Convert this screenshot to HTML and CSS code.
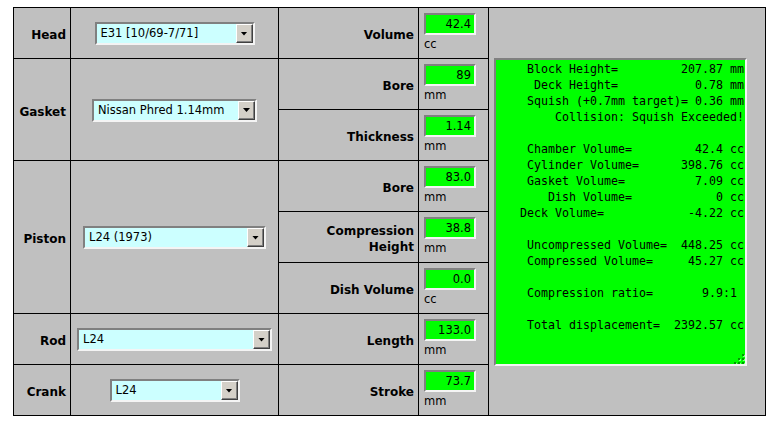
FILE: index.html
```html
<!DOCTYPE html>
<html lang="en">

<head>
    <meta charset="UTF-8">
    <meta name="viewport" content="width=device-width, initial-scale=1.0">
    <title>Compression Calculator</title>
    <link rel="stylesheet" href="styles.css">
</head>

<body>
    <div class="calc">
        <!-- Head -->
        <div class="cell cell--name">Head</div>
        <div class="cell cell--select">
            <div class="dropdown dropdown--head">
                <span class="dropdown__text">E31 [10/69-7/71]</span>
                <span class="dropdown__button"></span>
            </div>
        </div>
        <div class="cell cell--label">Volume</div>
        <div class="cell cell--value">
            <div class="field">42.4</div>
            <div class="unit">cc</div>
        </div>
        <div class="cell cell--results">
            <div class="results"><div class="results__text"> Block Height=         207.87 mm
  Deck Height=           0.78 mm
 Squish (+0.7mm target)= 0.36 mm
     Collision: Squish Exceeded!

 Chamber Volume=         42.4 cc
 Cylinder Volume=      398.76 cc
 Gasket Volume=          7.09 cc
    Dish Volume=            0 cc
Deck Volume=            -4.22 cc

 Uncompressed Volume=  448.25 cc
 Compressed Volume=     45.27 cc

 Compression ratio=       9.9:1

 Total displacement=  2392.57 cc</div>
                <svg class="results__grip" width="12" height="12" viewBox="0 0 12 12">
                    <g fill="#80ff80">
                        <rect x="10" y="3" width="2" height="2"/>
                        <rect x="10" y="7" width="2" height="2"/>
                        <rect x="6" y="7" width="2" height="2"/>
                        <rect x="10" y="11" width="2" height="1"/>
                        <rect x="6" y="11" width="2" height="1"/>
                        <rect x="2" y="11" width="2" height="1"/>
                    </g>
                    <g fill="#009a00">
                        <rect x="9" y="2" width="2" height="2"/>
                        <rect x="9" y="6" width="2" height="2"/>
                        <rect x="5" y="6" width="2" height="2"/>
                        <rect x="9" y="10" width="2" height="2"/>
                        <rect x="5" y="10" width="2" height="2"/>
                        <rect x="1" y="10" width="2" height="2"/>
                    </g>
                </svg>
            </div>
        </div>

        <!-- Gasket -->
        <div class="cell cell--name span-2">Gasket</div>
        <div class="cell cell--select span-2">
            <div class="dropdown dropdown--gasket">
                <span class="dropdown__text">Nissan Phred 1.14mm</span>
                <span class="dropdown__button"></span>
            </div>
        </div>
        <div class="cell cell--label">Bore</div>
        <div class="cell cell--value">
            <div class="field">89</div>
            <div class="unit">mm</div>
        </div>
        <div class="cell cell--label">Thickness</div>
        <div class="cell cell--value">
            <div class="field">1.14</div>
            <div class="unit">mm</div>
        </div>

        <!-- Piston -->
        <div class="cell cell--name span-3">Piston</div>
        <div class="cell cell--select span-3">
            <div class="dropdown dropdown--piston">
                <span class="dropdown__text">L24 (1973)</span>
                <span class="dropdown__button"></span>
            </div>
        </div>
        <div class="cell cell--label">Bore</div>
        <div class="cell cell--value">
            <div class="field">83.0</div>
            <div class="unit">mm</div>
        </div>
        <div class="cell cell--label">Compression<br>Height</div>
        <div class="cell cell--value">
            <div class="field">38.8</div>
            <div class="unit">mm</div>
        </div>
        <div class="cell cell--label">Dish Volume</div>
        <div class="cell cell--value">
            <div class="field">0.0</div>
            <div class="unit">cc</div>
        </div>

        <!-- Rod -->
        <div class="cell cell--name">Rod</div>
        <div class="cell cell--select">
            <div class="dropdown dropdown--rod">
                <span class="dropdown__text">L24</span>
                <span class="dropdown__button"></span>
            </div>
        </div>
        <div class="cell cell--label">Length</div>
        <div class="cell cell--value">
            <div class="field">133.0</div>
            <div class="unit">mm</div>
        </div>

        <!-- Crank -->
        <div class="cell cell--name">Crank</div>
        <div class="cell cell--select">
            <div class="dropdown dropdown--crank">
                <span class="dropdown__text">L24</span>
                <span class="dropdown__button"></span>
            </div>
        </div>
        <div class="cell cell--label">Stroke</div>
        <div class="cell cell--value">
            <div class="field">73.7</div>
            <div class="unit">mm</div>
        </div>
    </div>
</body>

</html>
```

FILE: styles.css
```css
body {
    background-color: #fff;
    color: #000;
    font-family: 'DejaVu Sans', Tahoma, sans-serif;
    font-size: 11.5px;
    margin: 0;
}

.calc {
    background-color: #000;
    border: 1px solid #000;
    display: grid;
    gap: 1px;
    grid-template-columns: 56px 207px 139px 69px 276px;
    grid-template-rows: repeat(8, 50px);
    margin: 7px 0 0 13px;
    width: max-content;
}

.cell {
    align-items: center;
    background-color: #c0c0c0;
    display: flex;
}

.span-2 {
    grid-row: span 2;
}

.span-3 {
    grid-row: span 3;
}

.cell--name,
.cell--label {
    font-size: 12px;
    font-weight: 700;
    justify-content: flex-end;
    line-height: 16px;
    padding: 4px 4px 0 0;
    text-align: right;
}

.cell--name {
    grid-column: 1;
}

.cell--select {
    grid-column: 2;
    justify-content: center;
    padding-top: 1px;
}

.cell--label {
    grid-column: 3;
}

.cell--value {
    align-items: flex-start;
    flex-direction: column;
    grid-column: 4;
    justify-content: center;
    padding: 0 0 1px 5px;
}

.cell--results {
    grid-column: 5;
    grid-row: 1 / span 8;
    padding-left: 5px;
}

/* inputs */
.field {
    background-color: #0f0;
    border: 2px solid;
    border-color: #808080 #f4f4f4 #f4f4f4 #808080;
    box-sizing: border-box;
    height: 22px;
    line-height: 18px;
    padding: 0 3px;
    text-align: right;
    width: 52px;
}

.unit {
    line-height: 16px;
    padding-top: 1px;
}

/* select boxes */
.dropdown {
    background-color: #ccffff;
    border: 2px solid;
    border-color: #808080 #f4f4f4 #f4f4f4 #808080;
    box-sizing: border-box;
    display: flex;
    height: 23px;
}

.dropdown--head { width: 160px; }
.dropdown--gasket { width: 165px; }
.dropdown--piston { width: 183px; }
.dropdown--rod { width: 195px; }
.dropdown--crank { width: 130px; }

.dropdown__text {
    flex: 1;
    line-height: 19px;
    padding-left: 4px;
    white-space: nowrap;
}

.dropdown__button {
    align-items: center;
    background-color: #d4d0c8;
    border: 1px solid;
    border-color: #fff #404040 #404040 #fff;
    box-shadow: inset -1px -1px #808080;
    box-sizing: border-box;
    display: flex;
    justify-content: center;
    width: 17px;
}

.dropdown__button::before {
    background-color: #000;
    clip-path: polygon(0 0, 100% 0, 50% 100%);
    content: '';
    height: 4px;
    width: 7px;
}

/* result box */
.results {
    background-color: #0f0;
    border: 2px solid;
    border-color: #808080 #f4f4f4 #f4f4f4 #808080;
    box-sizing: border-box;
    height: 308px;
    overflow: hidden;
    position: relative;
    width: 253px;
}

.results__text {
    font-family: 'DejaVu Sans Mono', 'Liberation Mono', monospace;
    font-size: 11.63px;
    line-height: 16px;
    padding: 1px 0 0 24px;
    white-space: pre;
}

.results__grip {
    bottom: 0;
    position: absolute;
    right: 0;
}
```
